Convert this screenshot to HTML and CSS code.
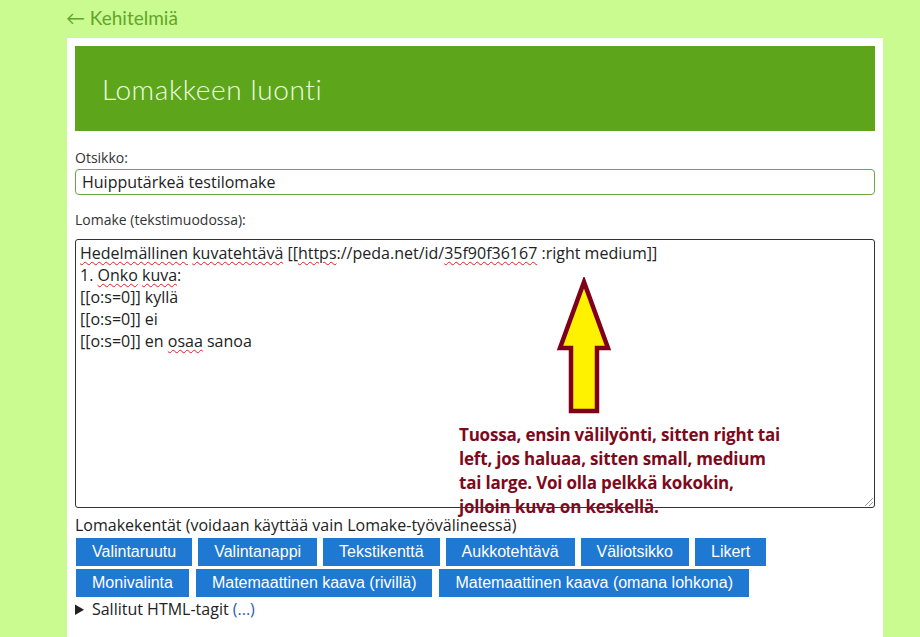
FILE: index.html
```html
<!DOCTYPE html>
<html lang="fi">
  <head>
    <meta charset="UTF-8" />
    <title>Lomakkeen luonti</title>
    <link rel="stylesheet" href="styles.css">
  </head>
  <body>
    <a class="back" href="#">&larr; Kehitelmiä</a>
    <div class="panel">
      <div class="header">
        <h1>Lomakkeen luonti</h1>
      </div>
      <form>
        <label class="field-label" for="otsikko">Otsikko:</label>
        <input type="text" id="otsikko" class="title-input" value="Huipputärkeä testilomake" />

        <label class="field-label second" for="lomake">Lomake (tekstimuodossa):</label>
        <div class="editor">
          <!-- annotation pasted on the screenshot -->
          <div class="note">
            <svg class="arrow" width="60" height="140" viewBox="0 0 60 140">
              <polygon points="30,5 6,71 17,71 17,134 43,134 43,71 54,71"
                fill="#fff200" stroke="#7f0019" stroke-width="4.5" stroke-linejoin="miter" />
            </svg>
            <p class="note-text">Tuossa, ensin välilyönti, sitten right tai<br>left, jos haluaa, sitten small, medium<br>tai large. Voi olla pelkkä kokokin,<br>jolloin kuva on keskellä.</p>
          </div>
          <div class="source" id="lomake" contenteditable="true"><div><span class="sp">Hedelmällinen</span> <span class="sp">kuvatehtävä</span> [[<span class="sp">https</span>://peda.net/id/<span class="sp">35f90f36167</span> :right medium]]</div><div>1. <span class="sp">Onko</span> <span class="sp">kuva</span>:</div><div>[[o:s=0]] kyllä</div><div>[[o:s=0]] ei</div><div>[[o:s=0]] en <span class="sp">osaa</span> sanoa</div></div>
          <span class="grip"></span>
        </div>

        <div class="fields-label">Lomakekentät (voidaan käyttää vain Lomake-työvälineessä)</div>
        <div class="buttons first">
          <button type="button">Valintaruutu</button>
          <button type="button">Valintanappi</button>
          <button type="button">Tekstikenttä</button>
          <button type="button">Aukkotehtävä</button>
          <button type="button">Väliotsikko</button>
          <button type="button">Likert</button>
        </div>
        <div class="buttons">
          <button type="button">Monivalinta</button>
          <button type="button">Matemaattinen kaava (rivillä)</button>
          <button type="button">Matemaattinen kaava (omana lohkona)</button>
        </div>
        <details class="tags">
          <summary>Sallitut HTML-tagit <a href="#">(...)</a></summary>
        </details>
      </form>
    </div>
  </body>
</html>
```

FILE: styles.css
```css
body {
  margin: 0;
  background: #c9fb90;
  font-family: "Open Sans", sans-serif;
  color: #222;
}
.back {
  display: block;
  height: 38px;
  line-height: 36px;
  padding-left: 66px;
  font-family: Lato, sans-serif;
  font-size: 19px;
  color: #63a52a;
  text-decoration: none;
}
.panel {
  margin-left: 67px;
  width: 800px;
  min-height: 583px;
  padding: 8px;
  background: #fff;
}
.header {
  height: 85px;
  background: #5da61c;
  display: flex;
  align-items: center;
}
.header h1 {
  margin: 0 0 0 27px;
  font-family: Lato, sans-serif;
  font-weight: 300;
  font-size: 28px;
  color: #eefde0;
  letter-spacing: 0.6px;
}
.field-label {
  display: block;
  margin-top: 17px;
  font-size: 14px;
  line-height: 20px;
  color: #333;
}
.field-label.second {
  margin-top: 15px;
  margin-bottom: 9px;
}
.title-input {
  display: block;
  width: 100%;
  height: 26px;
  box-sizing: border-box;
  margin: 1px 0 0;
  padding: 0 6px;
  border: 1px solid #67a842;
  border-radius: 4px;
  font-family: "Open Sans", sans-serif;
  font-size: 16px;
  color: #222;
}
.editor {
  position: relative;
  height: 269px;
  background: #fff;
}
.source {
  position: relative;
  z-index: 1;
  height: 100%;
  box-sizing: border-box;
  padding: 2px 4px;
  border: 1px solid #333;
  border-radius: 3px;
  background: transparent;
  font-size: 16px;
  line-height: 22px;
  color: #222;
  outline: none;
}
.sp {
  text-decoration: underline wavy #e02020;
  text-decoration-thickness: 1px;
  text-underline-offset: 2px;
}
.grip {
  position: absolute;
  z-index: 2;
  right: 2px;
  bottom: 2px;
  width: 8px;
  height: 8px;
  background: linear-gradient(135deg, transparent 45%, #999 45%, #999 55%, transparent 55%, transparent 70%, #999 70%, #999 80%, transparent 80%);
}
.note {
  position: absolute;
  z-index: 0;
  left: 384px;
  top: 38px;
}
.arrow {
  display: block;
  margin-left: 95px;
}
.note-text {
  margin: 6px 0 0;
  font-family: "Open Sans", sans-serif;
  font-weight: 700;
  font-size: 17px;
  line-height: 24px;
  letter-spacing: -0.2px;
  color: #7c0a1c;
}
.fields-label {
  margin-top: 6px;
  font-size: 16px;
  line-height: 22px;
  color: #222;
}
.buttons {
  display: flex;
  flex-wrap: wrap;
  gap: 7px;
  margin: 0 0 3px 1px;
}
.buttons.first {
  gap: 6px;
  margin-top: 2px;
}
.buttons button {
  height: 28px;
  padding: 0 16px;
  border: none;
  background: #1f78d1;
  color: #fff;
  font-family: "Liberation Sans", Arial, sans-serif;
  font-size: 16px;
  cursor: pointer;
}
.tags {
  margin-top: -2px;
  font-size: 16px;
  line-height: 22px;
}
.tags summary {
  cursor: pointer;
}
.tags a {
  color: #2a5db8;
  text-decoration: none;
}
```
